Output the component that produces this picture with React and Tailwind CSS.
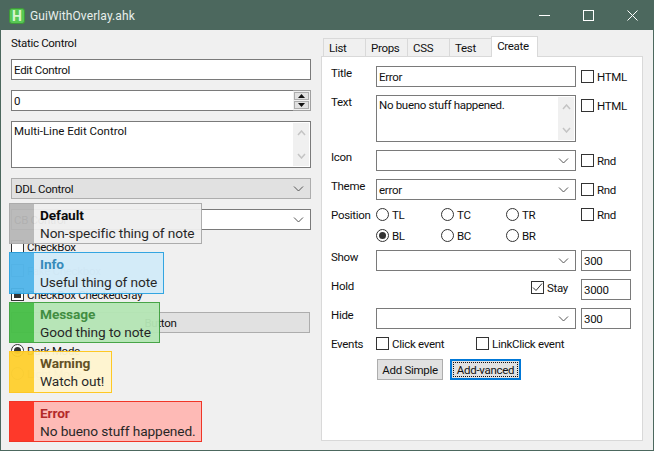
import React from "react";

const field = "border border-[#7a7a7a] bg-white";

const Chevron = () => (
  <svg width="11" height="6" viewBox="0 0 11 6" fill="none" stroke="#555" strokeWidth="1">
    <path d="M1 0.5 L5.5 5 L10 0.5" />
  </svg>
);

const Edit = ({ value, className = "" }) => (
  <div className={`${field} h-[21px] pl-[2px] flex items-center ${className}`}>{value}</div>
);

const Select = ({ value, className = "" }) => (
  <div className={`${field} h-[21px] pl-[2px] pr-[6px] flex items-center justify-between ${className}`}>
    <span>{value}</span>
    <Chevron />
  </div>
);

const MultiLine = ({ value, className = "" }) => (
  <div className={`${field} h-[47px] flex justify-between ${className}`}>
    <span className="pl-[2px] pt-[1px]">{value}</span>
    <div className="w-[16px] m-[1px] bg-[#f0f0f0] flex flex-col justify-between items-center py-[7px]">
      <svg width="9" height="6" viewBox="0 0 9 6" fill="none" stroke="#c4c4c4" strokeWidth="1.5">
        <path d="M1 5 L4.5 1 L8 5" />
      </svg>
      <svg width="9" height="6" viewBox="0 0 9 6" fill="none" stroke="#c4c4c4" strokeWidth="1.5">
        <path d="M1 1 L4.5 5 L8 1" />
      </svg>
    </div>
  </div>
);

const Check = ({ label, checked, gray, className = "" }) => (
  <div className={`flex items-center gap-[3px] h-[13px] ${className}`}>
    <div className="w-[13px] h-[13px] border border-[#333] bg-white flex items-center justify-center shrink-0">
      {checked && (
        <svg width="11" height="11" viewBox="0 0 11 11" fill="none" stroke="#333" strokeWidth="1">
          <path d="M1 5.5 L4 8.5 L10 1.5" />
        </svg>
      )}
      {gray && <div className="w-[7px] h-[7px] bg-[#333]" />}
    </div>
    {label && <span className="whitespace-nowrap">{label}</span>}
  </div>
);

const Radio = ({ label, on, className = "" }) => (
  <div className={`flex items-center gap-[3px] h-[13px] ${className}`}>
    <div className="w-[13px] h-[13px] rounded-full border border-[#333] bg-white flex items-center justify-center shrink-0">
      {on && <div className="w-[7px] h-[7px] rounded-full bg-[#333]" />}
    </div>
    {label && <span className="whitespace-nowrap">{label}</span>}
  </div>
);

const Overlay = ({ title, text, className, strip, titleColor }) => (
  <div className={`flex border opacity-95 text-[13.7px] leading-[18px] tracking-[-0.1px] text-[#1a1a1a] ${className}`}>
    <div className={`w-[24px] shrink-0 ${strip}`} />
    <div className="pl-[6px] pr-[6px] pt-[2px] whitespace-nowrap">
      <div className={`font-bold ${titleColor}`}>{title}</div>
      <div>{text}</div>
    </div>
  </div>
);

const Tab = ({ label, active }) =>
  active ? (
    <div className="w-[47px] h-[21px] -mb-[1px] pb-[2px] pr-[3px] bg-white border border-b-0 border-[#d9d9d9] flex items-center justify-center z-10">
      {label}
    </div>
  ) : (
    <div className="w-[42px] h-[18px] bg-[#f0f0f0] border border-b-0 border-l-[#d9d9d9] border-r-0 border-t-[#d9d9d9] flex items-center pl-[5px]">
      {label}
    </div>
  );

const Row = ({ label, className = "", children }) => (
  <div className={`flex ${className}`}>
    <div className="w-[45px] shrink-0 -mt-[1px]">{label}</div>
    {children}
  </div>
);

export default function App() {
  return (
    <div
      className="relative w-[654px] h-[451px] overflow-hidden bg-[#f0f0f0] border border-[#4c685e] text-[11.5px] leading-[16px] tracking-[-0.3px] text-[#111]"
      style={{ fontFamily: 'Roboto, "Noto Sans", sans-serif' }}
    >
      {/* title bar */}
      <div className="h-[29px] bg-[#4c685e] flex items-center text-[#e8efec] text-[12px] tracking-[0.1px]">
        <div className="ml-[8px] w-[16px] h-[16px] rounded-[3px] border border-[#3f9a3a] bg-[#58c855] flex items-center justify-center text-[14px] font-bold text-[#d8f5cf] leading-none">
          H
        </div>
        <span className="ml-[5px]">GuiWithOverlay.ahk</span>
        <div className="ml-auto flex items-center gap-[33px] mr-[15px]">
          <svg width="11" height="11" viewBox="0 0 11 11" stroke="#fff" fill="none">
            <path d="M0 5.5 H11" />
          </svg>
          <svg width="11" height="11" viewBox="0 0 11 11" stroke="#fff" fill="none">
            <rect x="0.5" y="0.5" width="10" height="10" />
          </svg>
          <svg width="11" height="11" viewBox="0 0 11 11" stroke="#fff" fill="none">
            <path d="M0.5 0.5 L10.5 10.5 M10.5 0.5 L0.5 10.5" />
          </svg>
        </div>
      </div>

      <div className="flex">
        {/* left column */}
        <div className="w-[300px] ml-[10px] flex flex-col">
          <div className="mt-[5px] h-[16px]">Static Control</div>
          <Edit value="Edit Control" className="mt-[8px]" />
          <div className="mt-[10px] flex">
            <Edit value="0" className="flex-1 border-r-0" />
            <div className="w-[18px] h-[21px] flex flex-col gap-[1px] border border-l-0 border-[#a0a0a0] bg-[#f0f0f0] pl-[1px] pr-[1px] py-[1px]">
              <div className="h-[9px] border border-[#adadad] bg-[#e1e1e1] flex items-center justify-center">
                <svg width="7" height="4" viewBox="0 0 7 4" fill="#111"><path d="M3.5 0 L7 4 H0 Z" /></svg>
              </div>
              <div className="h-[8px] border border-[#adadad] bg-[#e1e1e1] flex items-center justify-center">
                <svg width="7" height="4" viewBox="0 0 7 4" fill="#111"><path d="M0 0 H7 L3.5 4 Z" /></svg>
              </div>
            </div>
          </div>
          <MultiLine value="Multi-Line Edit Control" className="mt-[10px] tracking-normal" />
          <div className="mt-[10px] h-[21px] border border-[#adadad] bg-[#e1e1e1] pl-[3px] pr-[6px] flex items-center justify-between">
            <span>DDL Control</span>
            <Chevron />
          </div>
          <Select value="CB Control" className="mt-[10px]" />
          <Check label="CheckBox" className="mt-[10px]" />
          <div className="mt-[11px] flex items-center gap-[3px] h-[13px] text-[#a0a0a0]">
            <div className="w-[13px] h-[13px] border border-[#a0a0a0]" />
            <span>Fake Checkbox</span>
          </div>
          <Check label="CheckBox CheckedGray" gray className="mt-[11px]" />
          <div className="mt-[11px] h-[21px] mr-[1px] border border-[#adadad] bg-[#e1e1e1] flex items-center justify-center">
            Button
          </div>
          <Radio label="Dark Mode" on className="mt-[11px]" />
          <div className="mt-[10px] flex items-center gap-[3px] h-[13px] text-[#a0a0a0]">
            <div className="w-[13px] h-[13px] rounded-full border border-[#a0a0a0]" />
            <span>Light Mode</span>
          </div>
        </div>

        {/* right tab panel */}
        <div className="ml-[10px] w-[322px] mt-[6px] flex flex-col">
          <div className="flex items-end pl-[2px] h-[20px]">
            <Tab label="List" />
            <Tab label="Props" />
            <Tab label="CSS" />
            <Tab label="Test" />
            <Tab label="Create" active />
          </div>
          <div className="h-[385px] bg-white border border-[#d9d9d9] pl-[9px] pt-[9px] flex flex-col gap-2">
            <Row label="Title">
              <Edit value="Error" className="w-[200px]" />
              <Check label="HTML" className="ml-[5px] mt-[4px]" />
            </Row>
            <Row label="Text">
              <MultiLine value="No bueno stuff happened." className="w-[200px]" />
              <Check label="HTML" className="ml-[5px] mt-[4px]" />
            </Row>
            <Row label="Icon">
              <Select value="" className="w-[200px]" />
              <Check label="Rnd" className="ml-[5px] mt-[4px]" />
            </Row>
            <Row label="Theme">
              <Select value="error" className="w-[200px]" />
              <Check label="Rnd" className="ml-[5px] mt-[4px]" />
            </Row>
            <Row label="Position" className="h-[13px]">
              <Radio label="TL" className="w-[65px]" />
              <Radio label="TC" className="w-[65px]" />
              <Radio label="TR" className="w-[75px]" />
              <Check label="Rnd" />
            </Row>
            <Row label="" className="h-[13px]">
              <Radio label="BL" on className="w-[65px]" />
              <Radio label="BC" className="w-[65px]" />
              <Radio label="BR" className="w-[65px]" />
            </Row>
            <Row label="Show">
              <Select value="" className="w-[200px]" />
              <Edit value="300" className="ml-[5px] w-[50px]" />
            </Row>
            <Row label="Hold">
              <div className="w-[200px] flex justify-end pt-[2px]">
                <Check label="Stay" checked className="w-[45px]" />
              </div>
              <Edit value="3000" className="ml-[5px] w-[50px]" />
            </Row>
            <Row label="Hide">
              <Select value="" className="w-[200px]" />
              <Edit value="300" className="ml-[5px] w-[50px]" />
            </Row>
            <Row label="Events" className="h-[13px]">
              <Check label="Click event" className="w-[100px]" />
              <Check label="LinkClick event" />
            </Row>
            <div className="mt-[1px] ml-[46px] flex gap-[7px]">
              <div className="w-[66px] h-[21px] border border-[#adadad] bg-[#e1e1e1] flex items-center justify-center">
                Add Simple
              </div>
              <div className="w-[71px] h-[21px] border-2 border-[#0078d7] bg-[#e1e1e1] p-[1px]">
                <div className="w-full h-full border border-dotted border-[#111] flex items-center justify-center whitespace-nowrap">
                  Add-vanced
                </div>
              </div>
            </div>
          </div>
        </div>
      </div>

      {/* notifications floating over the left column */}
      <div className="absolute left-[8px] top-[202px] flex flex-col items-start gap-[8px]">
        <Overlay
          title="Default"
          text="Non-specific thing of note"
          className="w-[193px] h-[41px] bg-[#efefef] border-[#a9a9a9]"
          strip="bg-[#b8b8b8]"
          titleColor="text-black"
        />
        <Overlay
          title="Info"
          text="Useful thing of note"
          className="w-[155px] h-[42px] bg-[#d2ebf9] border-[#29a2e1]"
          strip="bg-[#4fb5ea]"
          titleColor="text-[#2e86b8]"
        />
        <Overlay
          title="Message"
          text="Good thing to note"
          className="w-[151px] h-[41px] bg-[#b5e6b5] border-[#3fa03f]"
          strip="bg-[#46bf46]"
          titleColor="text-[#3a8a3a]"
        />
        <Overlay
          title="Warning"
          text="Watch out!"
          className="w-[103px] h-[42px] bg-[#fff5cf] border-[#ffc61a]"
          strip="bg-[#ffd02e]"
          titleColor="text-[#5c4a1a]"
        />
        <Overlay
          title="Error"
          text="No bueno stuff happened."
          className="w-[193px] h-[41px] bg-[#ffb8b3] border-[#f02b1d]"
          strip="bg-[#ff3020]"
          titleColor="text-[#b01e1e]"
        />
      </div>
    </div>
  );
}
